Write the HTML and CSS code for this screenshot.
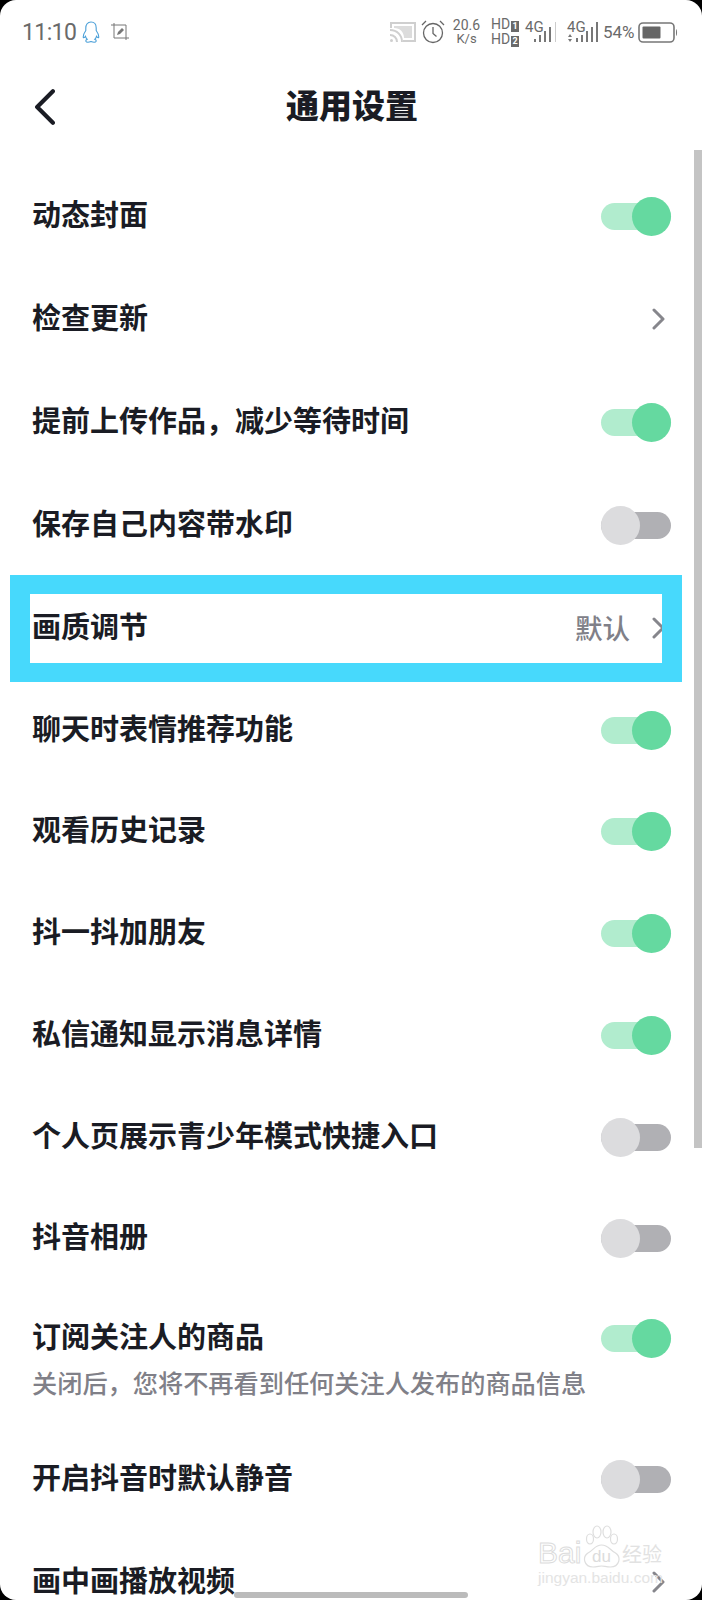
FILE: index.html
```html
<!DOCTYPE html>
<html lang="zh-CN">
<head>
    <meta charset="UTF-8">
    <meta name="viewport" content="width=device-width, initial-scale=1.0">
    <title>通用设置</title>
    <link rel="stylesheet" href="styles.css">
</head>
<body>
    <div class="screen">
        <div class="statusBar">
            <div class="statusLeft">
                <span class="clock">11:10</span>
                <svg class="qqIcon" viewBox="0 0 18 22" fill="none" stroke="#4a9fd8" stroke-width="1.1">
                    <path d="M9 1C5.5 1 3.8 3.6 3.8 7v2.5C2.4 11.5 1 14 1.3 16.5c.9.6 1.7-.4 2.2-1.200.3 1.200 1 2.200 1.800 3-1 .4-1.700 1-1.400 1.900.4 1 3.200 1 5.100.4 1.900.6 4.700.6 5.100-.4.3-.9-.4-1.500-1.400-1.900.8-.8 1.500-1.800 1.800-3 .5.8 1.300 1.800 2.200 1.200.3-2.500-1.100-5-2.500-7V7C14.200 3.600 12.500 1 9 1z"/>
                </svg>
                <svg class="editIcon" viewBox="0 0 18 18" fill="none" stroke="#777" stroke-width="1">
                    <path d="M0 2h15v15M3 0v15h15"/>
                    <path d="M6 12l1-3 4-4 2 2-4 4z" fill="#777" stroke="none"/>
                </svg>
            </div>
            <div class="statusRight">
                <svg class="castIcon" viewBox="0 0 26 20">
                    <path d="M1 6V1h24v18H13" fill="none" stroke="#cfcfcf" stroke-width="2"/>
                    <path d="M4 4h18v12H14C14 10 10 6 4 6z" fill="#dcdcdc"/>
                    <path d="M0 8c7 0 12 5 12 12M0 13c4 0 7 3 7 7" fill="none" stroke="#cfcfcf" stroke-width="2"/>
                    <circle cx="1.500" cy="18.500" r="1.500" fill="#cfcfcf"/>
                </svg>
                <svg class="alarmIcon" viewBox="0 0 24 24" fill="none" stroke="#666" stroke-width="1.300">
                    <circle cx="12" cy="13" r="9.500"/>
                    <path d="M12 7v6.500l3.500 3M1 5l4-4M23 5l-4-4"/>
                </svg>
                <div class="speed"><span>20.6</span><span class="speedUnit">K/s</span></div>
                <div class="hd">
                    <span>HD<b class="hdNum">1</b></span>
                    <span>HD<b class="hdNum">2</b></span>
                </div>
                <div class="signal">
                    <span class="signalText">4G</span>
                    <svg class="signalBars" viewBox="0 0 31 20" fill="#777">
                        <rect x="9" y="17" width="2" height="3"/><rect x="14" y="13" width="2" height="7"/><rect x="19" y="9" width="2" height="11"/><rect x="24" y="5" width="2" height="15"/><rect x="30" y="0" width="1" height="20" fill="#ccc"/>
                    </svg>
                </div>
                <div class="signal signalSecond">
                    <span class="signalText">4G</span>
                    <svg class="signalBars" viewBox="0 0 32 20" fill="#777">
                        <path d="M3 12l2 3H1zM3 20l-2-3h4z"/>
                        <rect x="9" y="16" width="2" height="4"/><rect x="14" y="13" width="2" height="7"/><rect x="19" y="9" width="2" height="11"/><rect x="24" y="5" width="2" height="15"/><rect x="29" y="0" width="2" height="20"/>
                    </svg>
                </div>
                <span class="battText">54%</span>
                <svg class="battIcon" viewBox="0 0 40 21" fill="none">
                    <rect x="1" y="1" width="35" height="19" rx="4" stroke="#777" stroke-width="1.600"/>
                    <rect x="4.500" y="4.500" width="18" height="12" rx="1" fill="#666"/>
                    <path d="M38 7c1.300.5 1.500 6.500 0 7z" fill="#777"/>
                </svg>
            </div>
        </div>

        <header class="topBar">
            <svg class="backIcon" viewBox="0 0 20 34" fill="none" stroke="#1a1c24" stroke-width="4" stroke-linecap="round" stroke-linejoin="round">
                <path d="M18 2L3 17l15 15"/>
            </svg>
            <h1 class="pageTitle">通用设置</h1>
        </header>

        <main class="settingList">
            <div class="settingRow rowTall"><span class="rowLabel">动态封面</span><span class="toggle on"></span></div>
            <div class="settingRow rowTall"><span class="rowLabel">检查更新</span><svg class="rowArrow" viewBox="0 0 14 22"><path d="M2 2l9 9-9 9"/></svg></div>
            <div class="settingRow rowTall"><span class="rowLabel">提前上传作品，减少等待时间</span><span class="toggle on"></span></div>
            <div class="settingRow rowTall"><span class="rowLabel">保存自己内容带水印</span><span class="toggle"></span></div>
            <div class="settingRow rowTall"><span class="rowLabel">画质调节</span><span class="rowValue">默认</span><svg class="rowArrow" viewBox="0 0 14 22"><path d="M2 2l9 9-9 9"/></svg></div>
            <div class="settingRow"><span class="rowLabel">聊天时表情推荐功能</span><span class="toggle on"></span></div>
            <div class="settingRow"><span class="rowLabel">观看历史记录</span><span class="toggle on"></span></div>
            <div class="settingRow"><span class="rowLabel">抖一抖加朋友</span><span class="toggle on"></span></div>
            <div class="settingRow"><span class="rowLabel">私信通知显示消息详情</span><span class="toggle on"></span></div>
            <div class="settingRow"><span class="rowLabel">个人页展示青少年模式快捷入口</span><span class="toggle"></span></div>
            <div class="settingRow"><span class="rowLabel">抖音相册</span><span class="toggle"></span></div>
            <div class="settingRow rowWithNote">
                <div class="rowMain"><span class="rowLabel">订阅关注人的商品</span><span class="toggle on"></span></div>
                <p class="rowNote">关闭后，您将不再看到任何关注人发布的商品信息</p>
            </div>
            <div class="settingRow rowTall"><span class="rowLabel">开启抖音时默认静音</span><span class="toggle"></span></div>
            <div class="settingRow rowTall"><span class="rowLabel">画中画播放视频</span><svg class="rowArrow" viewBox="0 0 14 22"><path d="M2 2l9 9-9 9"/></svg></div>
        </main>

        <!-- overlays -->
        <div class="scrollThumb"></div>
        <div class="highlightBox"></div>
        <div class="watermark">
            <div class="wmTop">
                <span class="wmBai">Bai</span>
                <div class="wmPaw">
                    <svg class="pawIcon" viewBox="0 0 37 43" fill="#fff" stroke="#dedede" stroke-width="1.200">
                        <ellipse cx="7" cy="14" rx="3.500" ry="5"/><ellipse cx="14" cy="7" rx="4" ry="6"/><ellipse cx="24" cy="7" rx="4" ry="6"/><ellipse cx="31" cy="14" rx="3.500" ry="5"/>
                        <path d="M18.500 20C12 20 11 25 5 28c-6 4-4 14 5 14 4 0 6-1 8.500-1s5 1 9 1c9 0 11-10 5-14-6-3-7-8-14-8z"/>
                    </svg>
                    <span class="wmDu">du</span>
                </div>
                <span class="wmJy">经验</span>
            </div>
            <div class="wmUrl">jingyan.baidu.com</div>
        </div>
        <div class="homeBar"></div>
        <span class="corner cornerTL"></span>
        <span class="corner cornerTR"></span>
        <span class="corner cornerBL"></span>
        <span class="corner cornerBR"></span>
    </div>
</body>
</html>
```

FILE: styles.css
```css
* {
    box-sizing: border-box;
}

body {
    margin: 0;
    background: #fff;
    font-family: "Noto Sans CJK SC", "Liberation Sans", sans-serif;
}

.screen {
    position: relative;
    width: 702px;
    height: 1600px;
    overflow: hidden;
    background: #fff;
}

/* status bar */
.statusBar {
    display: flex;
    justify-content: space-between;
    align-items: center;
    height: 64px;
    padding: 0 24px 0 22px;
    color: #6a6a6a;
    font-family: "Roboto", "Liberation Sans", sans-serif;
}

.statusLeft,
.statusRight {
    display: flex;
    align-items: center;
}

.clock {
    width: 54px;
    font-size: 23px;
    letter-spacing: -0.6px;
    white-space: nowrap;
}

.qqIcon {
    width: 18px;
    height: 22px;
    margin-left: 6px;
}

.editIcon {
    width: 18px;
    height: 18px;
    margin-left: 11px;
}

.castIcon {
    width: 26px;
    height: 20px;
}

.alarmIcon {
    width: 24px;
    height: 24px;
    margin-left: 5px;
}

.speed {
    display: flex;
    flex-direction: column;
    align-items: center;
    width: 27px;
    margin-left: 8px;
    font-size: 14px;
    line-height: 14px;
    white-space: nowrap;
}

.speedUnit {
    font-size: 13px;
}

.hd {
    display: flex;
    flex-direction: column;
    width: 28px;
    margin-left: 11px;
    font-size: 14px;
    line-height: 14px;
    white-space: nowrap;
}

.hdNum {
    display: inline-block;
    width: 8px;
    height: 11px;
    margin-left: 1px;
    background: #6a6a6a;
    color: #fff;
    font-size: 9px;
    line-height: 11px;
    text-align: center;
}

.signal {
    position: relative;
    width: 31px;
    height: 24px;
    margin-left: 6px;
}

.signalSecond {
    width: 32px;
    margin-left: 11px;
}

.signalText {
    position: absolute;
    top: 0;
    left: 0;
    font-size: 15px;
    line-height: 15px;
}

.signalBars {
    position: absolute;
    left: 0;
    bottom: 2px;
    width: 100%;
    height: 20px;
}

.battText {
    width: 31px;
    margin-left: 4px;
    font-size: 17px;
    white-space: nowrap;
}

.battIcon {
    width: 40px;
    height: 21px;
    margin-left: 4px;
}

/* title */
.topBar {
    position: relative;
    display: flex;
    justify-content: center;
    align-items: center;
    height: 86px;
}

.backIcon {
    position: absolute;
    left: 34px;
    top: 25px;
    width: 21px;
    height: 36px;
}

.pageTitle {
    margin: -6px 0 0 2px;
    font-size: 33px;
    font-weight: 900;
    line-height: 86px;
    color: #1a1c24;
}

/* rows */
.settingList {
    padding: 15px 31px 0 32px;
}

.settingRow {
    display: flex;
    align-items: center;
    height: 101.7px;
}

.rowTall {
    height: 102.9px;
}

.rowLabel {
    margin-right: auto;
    margin-top: -7px;
    font-size: 29px;
    font-weight: 700;
    color: #1a1c24;
}

.rowValue {
    margin-right: 22px;
    margin-top: -2px;
    font-size: 27.5px;
    font-weight: 500;
    color: #808088;
}

.rowArrow {
    width: 14px;
    height: 22px;
    margin-right: 5px;
    fill: none;
    stroke: #86868c;
    stroke-width: 3;
    stroke-linecap: round;
    stroke-linejoin: round;
}

.toggle {
    position: relative;
    width: 70px;
    height: 27px;
    border-radius: 14px;
    background: #b0b0b4;
}

.toggle::after {
    content: "";
    position: absolute;
    top: -6px;
    left: 0;
    width: 39px;
    height: 39px;
    border-radius: 50%;
    background: #dcdcde;
}

.toggle.on {
    background: #b1ecce;
}

.toggle.on::after {
    left: auto;
    right: 0;
    background: #65d9a0;
}

.rowWithNote {
    display: block;
    height: 138.5px;
    padding-top: 34px;
}

.rowMain {
    display: flex;
    align-items: center;
    height: 30px;
}

.rowNote {
    margin: 11px 0 0;
    font-size: 25.2px;
    font-weight: 500;
    line-height: 34px;
    color: #808088;
    white-space: nowrap;
}

/* things on top of the list */
.scrollThumb {
    position: absolute;
    top: 150px;
    right: 0;
    width: 8px;
    height: 998px;
    background: #c4c4c4;
}

.highlightBox {
    position: absolute;
    top: 575px;
    left: 10px;
    width: 672px;
    height: 107px;
    border: solid #47d9fc;
    border-width: 19px 20px;
}

.watermark {
    position: absolute;
    top: 1525px;
    left: 538px;
    width: 126px;
    color: #fff;
}

.wmTop {
    display: flex;
    align-items: flex-end;
    height: 43px;
}

.wmBai {
    width: 45px;
    font-family: "Liberation Sans", sans-serif;
    font-size: 30px;
    line-height: 30px;
    -webkit-text-stroke: 1px #dcdcdc;
}

.wmPaw {
    position: relative;
    width: 37px;
    height: 43px;
}

.pawIcon {
    width: 37px;
    height: 43px;
}

.wmDu {
    position: absolute;
    left: 9px;
    bottom: 3px;
    font-family: "Liberation Sans", sans-serif;
    font-size: 17px;
    line-height: 17px;
    color: #dcdcdc;
}

.wmJy {
    margin-left: 2px;
    font-size: 20px;
    line-height: 28px;
    white-space: nowrap;
    color: #e2e2e2;
}

.wmUrl {
    margin-top: 1px;
    font-family: "Liberation Sans", sans-serif;
    font-size: 15.5px;
    line-height: 18px;
    white-space: nowrap;
    color: #e4e4e4;
}

.homeBar {
    position: absolute;
    left: 234px;
    top: 1592px;
    width: 234px;
    height: 6px;
    border-radius: 3px;
    background: #bbb;
}

.corner {
    position: absolute;
    width: 16px;
    height: 16px;
    background: #000;
}

.corner::after {
    content: "";
    display: block;
    width: 100%;
    height: 100%;
    background: #fff;
}

.cornerTL { top: 0; left: 0; }
.cornerTR { top: 0; right: 0; }
.cornerBL { bottom: 0; left: 0; }
.cornerBR { bottom: 0; right: 0; }

.cornerTL::after { border-top-left-radius: 16px; }
.cornerTR::after { border-top-right-radius: 16px; }
.cornerBL::after { border-bottom-left-radius: 16px; }
.cornerBR::after { border-bottom-right-radius: 16px; }
```
